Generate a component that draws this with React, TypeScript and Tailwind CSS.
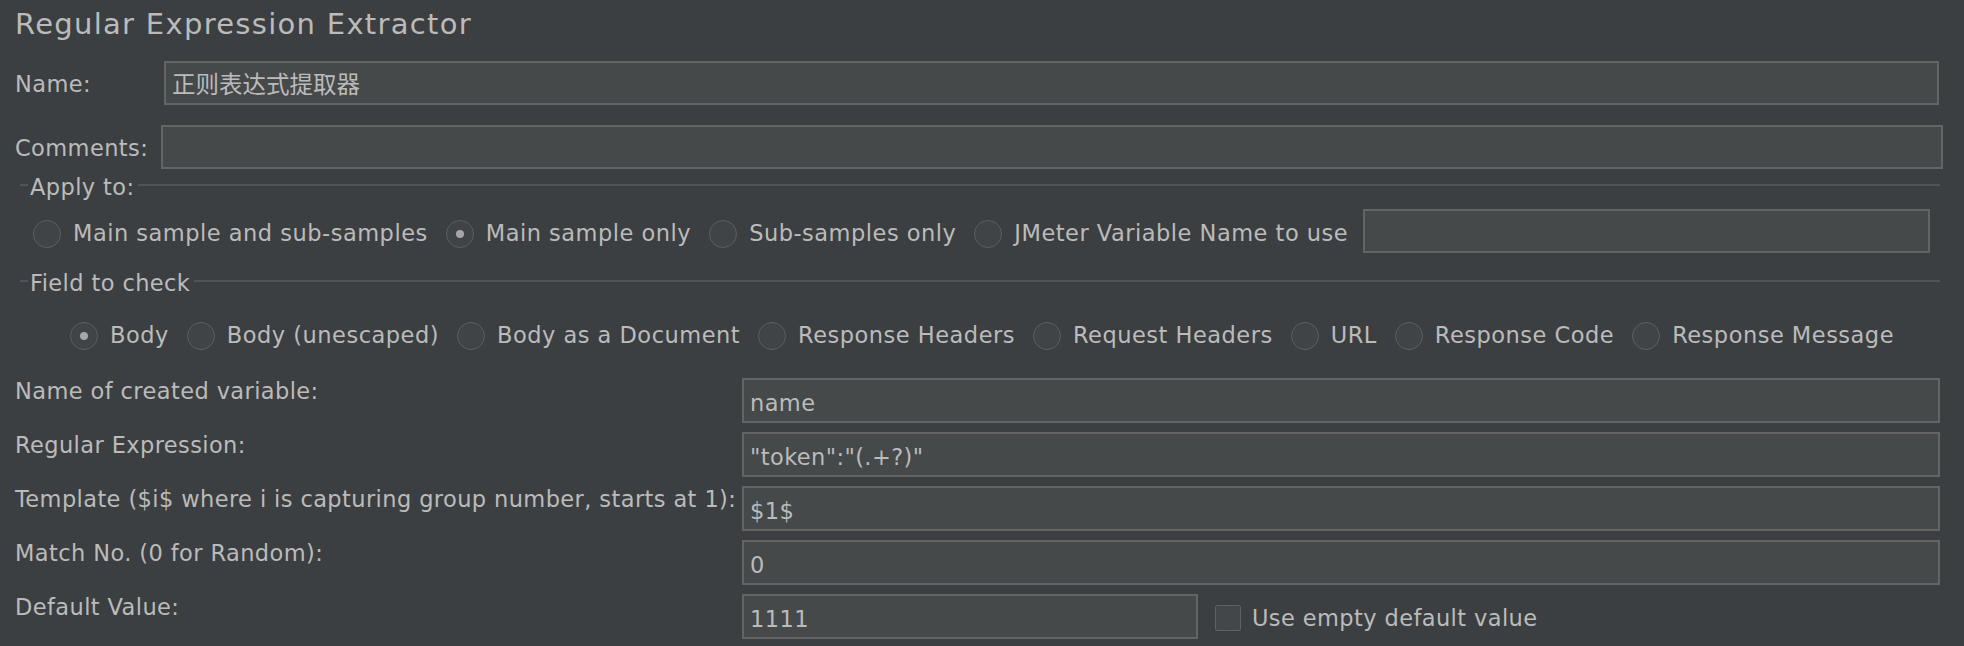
import React from 'react';

const applyOptions = [
  { label: 'Main sample and sub-samples', checked: false },
  { label: 'Main sample only', checked: true },
  { label: 'Sub-samples only', checked: false },
  { label: 'JMeter Variable Name to use', checked: false },
];

const fieldOptions = [
  { label: 'Body', checked: true },
  { label: 'Body (unescaped)', checked: false },
  { label: 'Body as a Document', checked: false },
  { label: 'Response Headers', checked: false },
  { label: 'Request Headers', checked: false },
  { label: 'URL', checked: false },
  { label: 'Response Code', checked: false },
  { label: 'Response Message', checked: false },
];

const extractorRows = [
  { label: 'Name of created variable:', value: 'name' },
  { label: 'Regular Expression:', value: '"token":"(.+?)"' },
  { label: 'Template ($i$ where i is capturing group number, starts at 1):', value: '$1$' },
  { label: 'Match No. (0 for Random):', value: '0' },
];

function Radio({ checked }: { checked?: boolean }) {
  return (
    <span className="flex h-[28px] w-[28px] shrink-0 items-center justify-center rounded-full border-[1.5px] border-[#5c5f61] bg-[#404446]">
      {checked ? <span className="h-[8px] w-[8px] rounded-full bg-[#a6a6a6]" /> : null}
    </span>
  );
}

function RadioItem({ label, checked }: { label: string; checked?: boolean }) {
  return (
    <label className="flex shrink-0 items-center gap-[12px] whitespace-nowrap pt-[5px] tracking-[0.5px]">
      <Radio checked={checked} />
      <span>{label}</span>
    </label>
  );
}

function TextBox({ value, className = '' }: { value?: string; className?: string }) {
  return (
    <input
      readOnly
      value={value ?? ''}
      className={`h-full min-w-0 border-2 border-[#646464] bg-[#45494a] pl-[6px] text-[#bbbbbb] outline-none ${className}`}
    />
  );
}

function GroupTitle({ title }: { title: string }) {
  return (
    <div className="flex h-[24px] items-center pl-[20px] pr-[24px]">
      <span className="mb-[4px] h-[2px] w-[8px] bg-[#515456]" />
      <span className="ml-[2px] mr-[4px] whitespace-nowrap leading-[24px]">{title}</span>
      <span className="mb-[4px] h-[2px] flex-1 bg-[#515456]" />
    </div>
  );
}

export default function App() {
  return (
    <div
      className="h-[646px] w-[1964px] overflow-hidden bg-[#3c3f41] text-[22.5px] tracking-[0.4px] text-[#bbbbbb]"
      style={{ fontFamily: '"DejaVu Sans", "Noto Sans CJK SC", sans-serif' }}
    >
      <h1 className="mt-[7px] h-[34px] pl-[15px] text-[29px] leading-[34px] tracking-[1.3px] text-[#bbbbbb]">
        Regular Expression Extractor
      </h1>

      <div className="mt-[20px] flex h-[44px] items-center pl-[15px] pr-[25px]">
        <span className="w-[149px] shrink-0 pt-[2px] leading-[26px]">Name:</span>
        <TextBox value="正则表达式提取器" className="flex-1 text-[23.5px] tracking-[0px]" />
      </div>

      <div className="mt-[20px] flex h-[44px] items-center pl-[15px] pr-[21px]">
        <span className="w-[146px] shrink-0 pt-[2px] leading-[26px]">Comments:</span>
        <TextBox className="flex-1" />
      </div>

      <div className="mt-[6px]">
        <GroupTitle title="Apply to:" />
      </div>

      <div className="mt-[10px] flex h-[44px] items-center gap-[18px] pl-[33px] pr-[34px]">
        {applyOptions.map((opt) => (
          <RadioItem key={opt.label} label={opt.label} checked={opt.checked} />
        ))}
        <TextBox className="-ml-[3px] flex-1" />
      </div>

      <div className="mt-[18px]">
        <GroupTitle title="Field to check" />
      </div>

      <div className="mt-[16px] flex h-[44px] items-center justify-center gap-[18px]">
        {fieldOptions.map((opt) => (
          <RadioItem key={opt.label} label={opt.label} checked={opt.checked} />
        ))}
      </div>

      <div className="mt-[23px] flex flex-col gap-[9px] pr-[24px]">
        {extractorRows.map((row) => (
          <div key={row.label} className="flex h-[45px] items-start">
            <span className="w-[742px] shrink-0 whitespace-nowrap pl-[15px] leading-[26px]">{row.label}</span>
            <TextBox value={row.value} className="flex-1 pt-[4px]" />
          </div>
        ))}
        <div className="flex h-[45px] items-start">
          <span className="w-[742px] shrink-0 pl-[15px] leading-[26px]">Default Value:</span>
          <TextBox value="1111" className="w-[456px] pt-[4px]" />
          <label className="ml-[17px] flex h-full items-center gap-[11px] whitespace-nowrap pt-[2px]">
            <span className="h-[26px] w-[26px] rounded-[2px] border-[1.5px] border-[#5f6264] bg-[#43474a]" />
            <span className="pt-[3px]">Use empty default value</span>
          </label>
        </div>
      </div>
    </div>
  );
}
